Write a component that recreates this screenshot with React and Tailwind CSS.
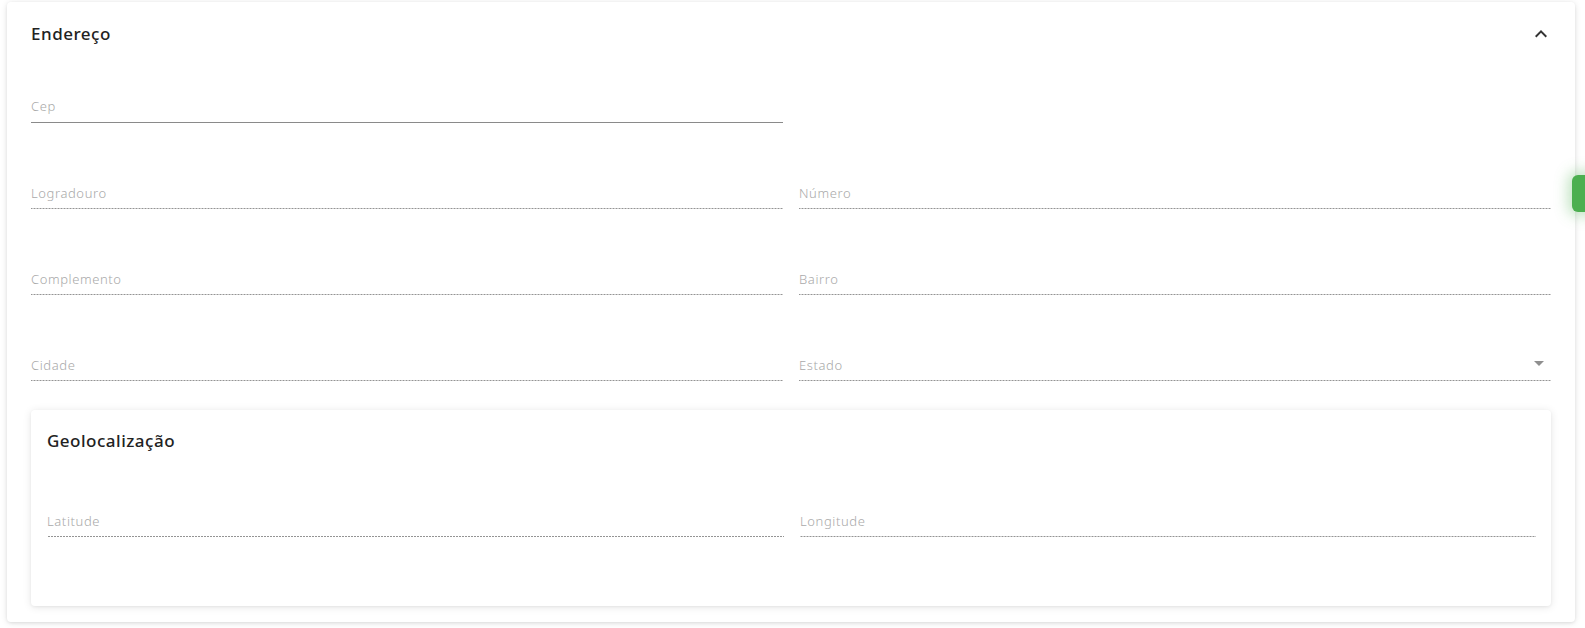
import React from "react";

const dotted =
  "bg-[linear-gradient(to_right,rgba(0,0,0,0.42)_66%,transparent_0%)] bg-[length:3px_1px] bg-repeat-x bg-bottom";

function Field({ label, h, solid, select }) {
  return (
    <div className={`relative flex flex-col justify-end ${h}`}>
      <div
        className={`relative flex items-end h-[32px] pb-[6px] ${
          solid ? "border-b border-[#8a8a8a]" : dotted
        }`}
      >
        <span className="text-[13px] leading-[20px] text-[#a9a9a9] font-light tracking-[0.6px]">
          {label}
        </span>
        {select && (
          <svg
            className="absolute right-[0px] bottom-[6px]"
            width="24"
            height="24"
            viewBox="0 0 24 24"
          >
            <path d="M7 10l5 5 5-5z" fill="#8f8f8f" />
          </svg>
        )}
      </div>
    </div>
  );
}

export default function App() {
  return (
    <div
      className="relative w-[1585px] h-[628px] bg-white overflow-hidden"
      style={{ fontFamily: '"Noto Sans", "Liberation Sans", sans-serif' }}
    >
      <div className="mt-[2px] ml-[7px] w-[1568px] h-[620px] bg-white rounded-[4px] shadow-[0_1px_6px_rgba(0,0,0,0.12),0_1px_3px_rgba(0,0,0,0.06)]">
        <div className="h-[64px] pl-[24px] pr-[22px] flex items-center justify-between">
          <span className="text-[17px] font-medium text-[#222] tracking-[0.5px]">
            Endereço
          </span>
          <svg width="24" height="24" viewBox="0 0 24 24">
            <path
              d="M12 8l-6 6 1.41 1.41L12 10.83l4.59 4.58L18 14z"
              fill="#333"
            />
          </svg>
        </div>
        <div className="px-[24px]">
          <div className="grid grid-cols-2 gap-x-[16px]">
            <Field label="Cep" h="h-[57px]" solid />
            <div />
            <Field label="Logradouro" h="h-[86px]" />
            <Field label="Número" h="h-[86px]" />
            <Field label="Complemento" h="h-[86px]" />
            <Field label="Bairro" h="h-[86px]" />
            <Field label="Cidade" h="h-[86px]" />
            <Field label="Estado" h="h-[86px]" select />
          </div>
          <div className="mt-[29px] h-[196px] bg-white rounded-[4px] shadow-[0_1px_8px_rgba(0,0,0,0.10),0_1px_3px_rgba(0,0,0,0.05)]">
            <div className="h-[62px] px-[16px] flex items-center">
              <span className="text-[17px] font-medium text-[#222] tracking-[0.5px]">
                Geolocalização
              </span>
            </div>
            <div className="grid grid-cols-[737px_736px] gap-x-[16px] pl-[16px]">
              <Field label="Latitude" h="h-[65px]" />
              <Field label="Longitude" h="h-[65px]" />
            </div>
          </div>
        </div>
      </div>
      <div className="absolute left-[1572px] top-[175px] w-[20px] h-[37px] rounded-l-[6px] bg-[#4caf50] shadow-[0_0_14px_4px_rgba(76,175,80,0.35)]" />
    </div>
  );
}
